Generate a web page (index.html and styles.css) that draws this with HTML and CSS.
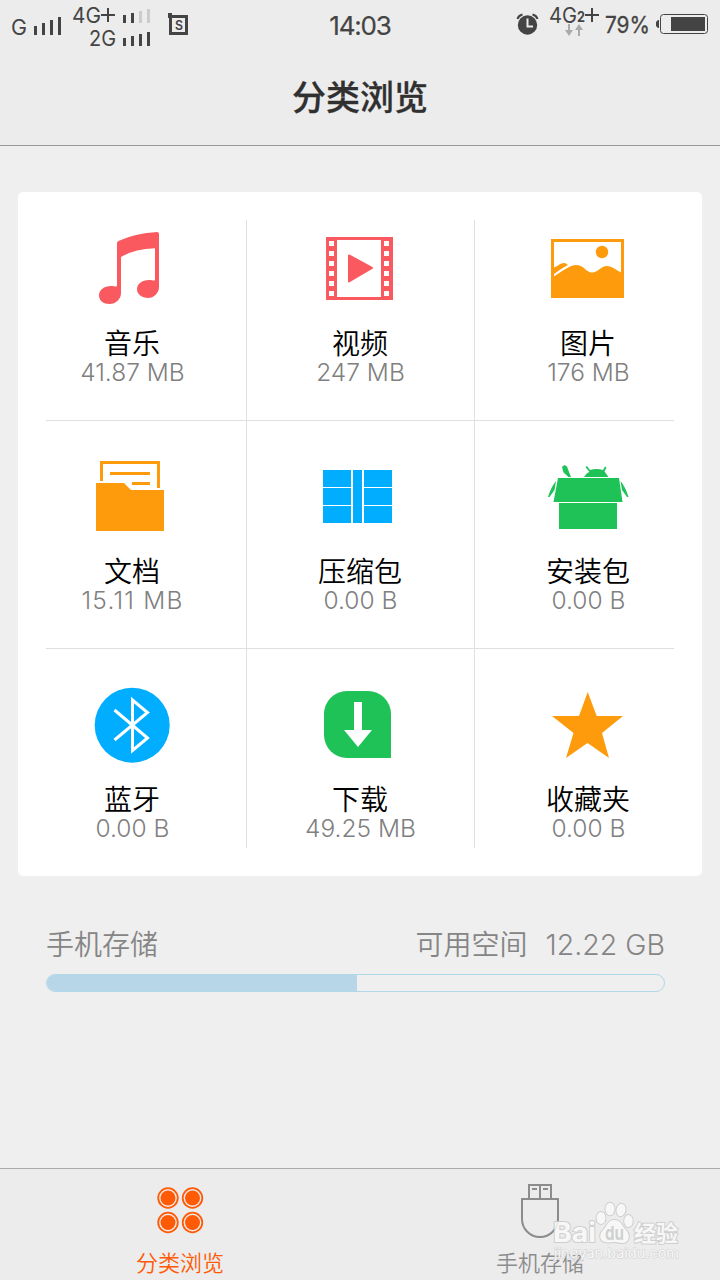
FILE: index.html
```html
<!DOCTYPE html>
<html lang="zh-CN">
<head>
<meta charset="utf-8">
<title>分类浏览</title>
<link rel="stylesheet" href="styles.css">
</head>
<body>
<div class="screen">
  <header class="header">
    <div class="status">
      <svg class="status-side" width="240" height="52" viewBox="0 0 240 52">
        <g class="status-text">
          <text x="11" y="35" font-size="21" textLength="16" lengthAdjust="spacingAndGlyphs">G</text>
          <text x="72" y="23" font-size="21" textLength="29" lengthAdjust="spacingAndGlyphs">4G</text>
          <text x="89" y="46" font-size="21" textLength="27" lengthAdjust="spacingAndGlyphs">2G</text>
        </g>
        <path d="M101 15h14M108 8v14" stroke="#444" stroke-width="2"/>
        <g fill="#444">
          <path d="M34 26h3v9h-3zM42 23h3v12h-3zM50 20h3v15h-3zM58 17h3v18h-3z"/>
          <path d="M123 15h3v8h-3zM131 13h3v10h-3z"/>
          <path d="M139 11h3v12h-3zM147 9h3v14h-3z" fill="#ccc"/>
          <path d="M123 38h3v8h-3zM131 36h3v10h-3zM139 34h3v12h-3zM147 32h3v14h-3z"/>
          <path d="M168 13h4v2h16v20h-19V18h-1zM172 18v14h13V18z" fill-rule="evenodd"/>
        </g>
        <text class="status-text" x="175" y="30" font-size="13" font-weight="600" textLength="8" lengthAdjust="spacingAndGlyphs">S</text>
      </svg>
      <time class="clock">14:03</time>
      <svg class="status-side" width="240" height="52" viewBox="480 0 240 52">
        <circle cx="527.5" cy="25" r="9.7" fill="#444"/>
        <path d="M527.5 18.500v8h5.500" fill="none" stroke="#ececec" stroke-width="2"/>
        <path d="M517.500 19q1-3.500 5-4.500M537.500 19q-1-3.500-5-4.500" fill="none" stroke="#444" stroke-width="2"/>
        <g class="status-text">
          <text x="549" y="23" font-size="21.500" textLength="28" lengthAdjust="spacingAndGlyphs">4G</text>
          <text x="577" y="22" font-size="15" font-weight="700" textLength="8" lengthAdjust="spacingAndGlyphs">2</text>
          <text x="605" y="33" font-size="23.500" stroke="#444" stroke-width=".3" textLength="45" lengthAdjust="spacingAndGlyphs">79%</text>
        </g>
        <path d="M585 15h14M592 8v14" stroke="#444" stroke-width="2"/>
        <path d="M568 24h2v6h3l-4 6-4-6h3zM578 36h2v-6h3l-4-6-4 6h3z" fill="#aaa"/>
        <rect x="660.500" y="14.500" width="47" height="19" rx="3" fill="none" stroke="#444"/>
        <path d="M671 17h34v14h-34zM659 20v8h-1l-2-2v-4l2-2z" fill="#444"/>
      </svg>
    </div>
    <h1 class="title">分类浏览</h1>
  </header>

  <main class="main">
    <section class="card">
      <div class="cell">
        <svg class="icon" viewBox="18 192 228 135"><path fill="#fa5a5f" d="M117 243q0-1.500 2-2.200Q136 233 157 232q2 0 2 2V287C159 293 154 298 148 298 142 298 137 294.500 137 289.300 137 284 142 280 149 280 153 280 155 281.500 155 279V248.200Q134 249 121 257V293C121 299 116 304 109.500 304 103.500 304 99 300.500 99 295.500 99 290 104 286 111 286 115 286 117 287.500 117 285Z"/></svg>
        <div class="name">音乐</div><div class="size"><span>41.87 MB</span></div>
      </div>
      <div class="cell">
        <svg class="icon" viewBox="246 192 228 135"><path fill="#fa5a5f" fill-rule="evenodd" d="M326 237h67v63h-67zM337 240v57h44v-57zM329 241v5h5v-5zM329 251v5h5v-5zM329 261v5h5v-5zM329 271v5h5v-5zM329 281v5h5v-5zM329 291v5h5v-5zM384 241v5h5v-5zM384 251v5h5v-5zM384 261v5h5v-5zM384 271v5h5v-5zM384 281v5h5v-5zM384 291v5h5v-5z"/><path fill="#fa5a5f" stroke="#fa5a5f" stroke-width="2" stroke-linejoin="round" d="M349 255.500v26l23-13.500z"/></svg>
        <div class="name">视频</div><div class="size"><span>247 MB</span></div>
      </div>
      <div class="cell">
        <svg class="icon" viewBox="474 192 228 135"><path fill="none" stroke="#fd9b0d" stroke-width="3" d="M552.500 240.500h70v56h-70z"/><circle cx="602" cy="252" r="6.200" fill="#fd9b0d"/><path fill="#fd9b0d" d="M553 277C563 271 570 265 576 265 584 265 586 272.500 592 272.500 598 272.500 601 266 607 266 612 266 616 270 622 273V297H553ZM553 268C558 266 561 262.500 565 263L568 265Q562 268 554 274Z"/></svg>
        <div class="name">图片</div><div class="size"><span>176 MB</span></div>
      </div>
      <div class="cell">
        <svg class="icon" viewBox="18 420 228 135"><path fill="#fd9b0d" d="M96 483h28l7 7h33v41H96zM100 461h60v27h-3v-24h-54v17h-3zM110 472h40v3h-40zM132 482h18v3h-18z"/></svg>
        <div class="name">文档</div><div class="size wide"><span>15.11 MB</span></div>
      </div>
      <div class="cell">
        <svg class="icon" viewBox="246 420 228 135"><path fill="#00adff" d="M323 470h28v17h-28zM323 488h28v17h-28zM323 506h28v17h-28zM353 470h9v53h-9zM364 470h28v17h-28zM364 488h28v17h-28zM364 506h28v17h-28z"/></svg>
        <div class="name">压缩包</div><div class="size"><span>0.00 B</span></div>
      </div>
      <div class="cell">
        <svg class="icon" viewBox="474 420 228 135"><path fill="#1ec257" d="M558 478h61l3.500 24h-69zM559 503h58v26h-58zM556 481l-1.500 9-5 7h-1.500q3-10 8-16M620.500 481l1.500 9 5 7h1.500q-3-10-8-16M562 467l2.500-2 2.500 1.500 2 5.500 2 5h-2.500l-5-4.500zM584 477c2-3 4-4.500 5.500-5l-4-5 1.500-1 3 4q6.500-2 13 0l2-3.500 1.500 1-2 4 4 5.500z"/></svg>
        <div class="name">安装包</div><div class="size"><span>0.00 B</span></div>
      </div>
      <div class="cell">
        <svg class="icon" viewBox="18 648 228 135"><circle cx="132.200" cy="725.200" r="37.500" fill="#00adff"/><path d="M114.500 710l33 28-15 12.500v-50.500l15 12.500-33 27.500" fill="none" stroke="#fff" stroke-width="3"/></svg>
        <div class="name">蓝牙</div><div class="size"><span>0.00 B</span></div>
      </div>
      <div class="cell">
        <svg class="icon" viewBox="246 648 228 135"><path fill="#1ec257" d="M324 714a23 23 0 0 1 23-23h21a23 23 0 0 1 23 23v44h-44a23 23 0 0 1-23-23z"/><path fill="#fff" d="M354 702h8v28h10l-14 17-14-17h10z"/></svg>
        <div class="name">下载</div><div class="size"><span>49.25 MB</span></div>
      </div>
      <div class="cell">
        <svg class="icon" viewBox="474 648 228 135"><path fill="#fd9b0d" d="M587.700 692l9 24h26.300l-21 17 7 25-21.500-15-21.500 15 7.500-25-21.500-17h27z"/></svg>
        <div class="name">收藏夹</div><div class="size"><span>0.00 B</span></div>
      </div>
      <svg class="rules" viewBox="0 0 684 684"><path fill="#e0e0e0" d="M228 28h1v628h-1zM456 28h1v628h-1zM28 228h628v1H28zM28 456h628v1H28z"/></svg>
    </section>

    <section class="storage">
      <div class="storage-row"><span>手机存储</span><span class="free">可用空间<span class="amount">12.22 GB</span></span></div>
      <div class="bar"><div class="fill"></div></div>
    </section>
  </main>

  <nav class="tabs">
    <div class="tab active">
      <svg class="tab-icon" viewBox="150 1182 60 60"><g fill="none" stroke="#ff5a05" stroke-width="1.800"><circle cx="168" cy="1198" r="9.800"/><circle cx="192.500" cy="1198" r="9.800"/><circle cx="168" cy="1222.500" r="9.800"/><circle cx="192.500" cy="1222.500" r="9.800"/></g><g fill="#ff5a05"><circle cx="168" cy="1198" r="7.500"/><circle cx="192.500" cy="1198" r="7.500"/><circle cx="168" cy="1222.500" r="7.500"/><circle cx="192.500" cy="1222.500" r="7.500"/></g></svg>
      <span>分类浏览</span>
    </div>
    <div class="tab">
      <svg class="tab-icon" viewBox="510 1182 60 60"><path d="M529 1198v-13h22v13M540 1185v13M532 1189h5M543 1189h5M522 1199h36v20a18 18 0 0 1-36 0z" fill="none" stroke="#8c8c8c" stroke-width="2"/></svg>
      <span>手机存储</span>
    </div>
  </nav>

  <svg class="watermark" width="140" height="70" viewBox="545 1195 140 70">
    <g class="mark" fill="#fafafa" stroke="#cacaca" stroke-width="2">
      <text x="553" y="1242" font-size="27" font-weight="700" textLength="43" lengthAdjust="spacingAndGlyphs">Bai</text>
      <ellipse cx="601" cy="1218" rx="4.500" ry="6"/><ellipse cx="610" cy="1209" rx="4.500" ry="6.300"/><ellipse cx="621" cy="1210" rx="4.500" ry="6.200" transform="rotate(12 621 1210)"/><ellipse cx="628.500" cy="1221" rx="4.300" ry="6"/>
      <path d="M614 1220c7 0 8 6 12 10 5 6 3 13-4 13-4 0-5-1-8-1s-6 1-9 0c-6-1-6-8-2-12 4-4 5-10 11-10z"/>
      <text x="634" y="1241" font-size="22" font-weight="700" textLength="44" lengthAdjust="spacingAndGlyphs">经验</text>
    </g>
    <text x="605" y="1240" font-size="19" font-weight="700" fill="#ccc" textLength="19" lengthAdjust="spacingAndGlyphs">du</text>
    <text class="mark" x="554" y="1258" font-size="13.500" fill="#fafafa" stroke="#d0d0d0" stroke-width="1.200" textLength="125" lengthAdjust="spacingAndGlyphs">jingyan.baidu.com</text>
  </svg>
</div>
</body>
</html>
```
FILE: styles.css
```css
* { box-sizing: border-box; }
body { margin: 0; }
.screen {
  position: relative;
  display: flex;
  flex-direction: column;
  width: 720px;
  height: 1280px;
  overflow: hidden;
  background: #efefef;
  font-family: Inter, "Noto Sans CJK SC", sans-serif;
}
.header {
  height: 146px;
  background: #ececec;
  border-bottom: 1px solid #999;
}
.status { display: flex; height: 52px; }
.status-side { display: block; }
.status-text { fill: #444; }
.clock {
  width: 240px;
  line-height: 52px;
  text-align: center;
  font-size: 26px;
  letter-spacing: -1.2px;
  color: #444;
  -webkit-text-stroke: .2px #444;
}
.title {
  margin: 21px 0 0;
  font-size: 34px;
  line-height: 50px;
  font-weight: 500;
  text-align: center;
  color: #303030;
  -webkit-text-stroke: .3px #303030;
}
.main { flex: 1; padding: 46px 18px 0; }
.card {
  position: relative;
  display: grid;
  grid-template-columns: repeat(3, 228px);
  grid-template-rows: repeat(3, 228px);
  background: #fff;
  border-radius: 5px;
}
.rules { position: absolute; inset: 0; width: 684px; height: 684px; }
.cell { text-align: center; }
.icon { display: block; width: 228px; height: 135px; }
.name {
  padding-top: 2px;
  font-size: 28px;
  line-height: 30px;
  font-weight: 350;
  color: #000;
}
.size {
  padding-left: 1px;
  font-size: 24.5px;
  line-height: 26px;
  font-weight: 300;
  color: #808080;
}
.size.wide { letter-spacing: 1.2px; }
.storage { padding: 48px 19px 0 28px; }
.storage-row {
  display: flex;
  justify-content: space-between;
  padding-right: 18px;
  font-size: 28px;
  line-height: 42px;
  font-weight: 350;
  color: #858585;
}
.amount {
  margin-left: 18px;
  font-size: 28.5px;
  font-weight: 300;
}
.bar {
  width: 619px;
  height: 18px;
  margin-top: 8px;
  border: 1px solid #b0d8e8;
  border-radius: 9px;
  overflow: hidden;
}
.fill { width: 310px; height: 16px; background: #b7d6e7; }
.tabs {
  display: flex;
  height: 112px;
  background: #ececec;
  border-top: 1px solid #aaa;
}
.tab {
  flex: 1;
  display: flex;
  flex-direction: column;
  align-items: center;
  padding-top: 13px;
  gap: 3px;
  font-size: 22px;
  line-height: 36px;
  font-weight: 350;
  color: #8c8c8c;
}
.tab.active { color: #ff5a05; }
.tab-icon { flex: none; width: 60px; height: 60px; }
.watermark { position: absolute; left: 545px; top: 1195px; opacity: .85; }
.mark { paint-order: stroke; }
```
